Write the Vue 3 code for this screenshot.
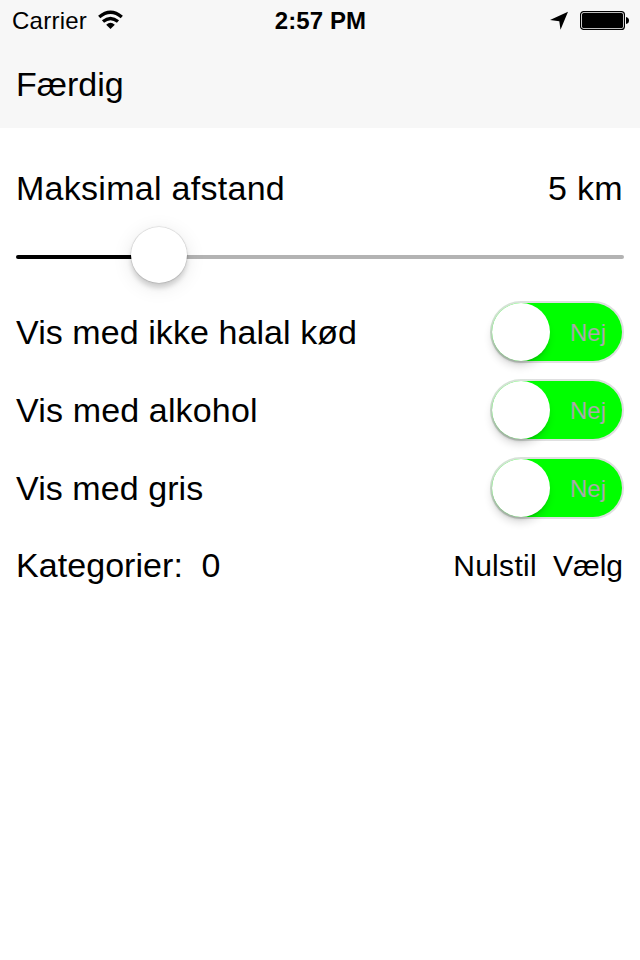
<script setup>
import { ref } from 'vue'

const distance = ref(5)
const filters = ref([
  { id: 'meat', label: 'Vis med ikke halal kød' },
  { id: 'alcohol', label: 'Vis med alkohol' },
  { id: 'pork', label: 'Vis med gris' },
])
const categories = ref(0)
</script>

<template>
  <main class="screen">
    <header class="top">
      <div class="status">
        <div class="carrier">
          <span class="carrier-name">Carrier</span>
          <svg class="wifi" width="26" height="20" viewBox="0 0 26 20">
            <g fill="none" stroke="#000" stroke-width="3.3">
              <path d="M2.2 7Q13.5 -2.5 24.8 7" />
              <path d="M6 11.6Q13.5 5.4 21 11.6" />
            </g>
            <path d="M9.2 14.7Q13.5 11 17.8 14.7L13.5 19Z" />
          </svg>
        </div>
        <span class="time">2:57 PM</span>
        <div class="indicators">
          <svg width="18" height="19" viewBox="0 0 18 19">
            <path d="M18 0.8L10.5 18.8L9.3 10.3L0 8.9Z" />
          </svg>
          <svg width="49" height="19" viewBox="0 0 49 19">
            <rect x="0.6" y="0.6" width="43.8" height="17.8" rx="3" fill="#fff" stroke="#000" stroke-width="1.2" />
            <rect x="2" y="2" width="41" height="15" rx="1.5" />
            <path d="M46 6Q49 6.5 49 9.5Q49 12.5 46 13Z" />
          </svg>
        </div>
      </div>
      <nav class="nav"><span class="done">Færdig</span></nav>
    </header>

    <section class="row distance">
      <span class="title">Maksimal afstand</span>
      <span class="km">{{ distance }} km</span>
    </section>
    <div class="slider">
      <span class="track filled"></span>
      <span class="thumb"></span>
      <span class="track rest"></span>
    </div>

    <section v-for="f in filters" :key="f.id" class="row filter">
      <span :class="f.id">{{ f.label }}</span>
      <div class="toggle">
        <span class="knob"></span>
        <span class="state">Nej</span>
      </div>
    </section>

    <section class="row categories">
      <span class="cat">Kategorier:</span>
      <span class="count">{{ categories }}</span>
      <div class="actions">
        <span class="reset">Nulstil</span>
        <span class="choose">Vælg</span>
      </div>
    </section>
  </main>
</template>

<style>
body {
  background: #fff;
}
</style>

<style scoped>
.screen {
  width: 640px;
  height: 960px;
  overflow: hidden;
  background: #fff;
  color: #000;
  font-family: "Liberation Sans", Arial, sans-serif;
  font-size: 34px;
  line-height: 40px;
  white-space: nowrap;
}
svg {
  display: block;
}
.top {
  height: 128px;
  background: #f7f7f7;
}
.status {
  display: grid;
  grid-template-columns: 1fr auto 1fr;
  align-items: center;
  height: 40px;
  padding: 0 11px 0 12px;
  font-size: 24px;
  line-height: 28px;
}
.carrier {
  display: flex;
  align-items: center;
}
.carrier-name {
  width: 85px;
  padding-top: 2px;
  letter-spacing: 0.25px;
}
.time {
  padding-top: 2px;
  font-weight: 700;
  font-size: 24px;
  letter-spacing: 0.1px;
}
.indicators {
  display: flex;
  justify-content: flex-end;
  gap: 12px;
}
.nav {
  padding: 24px 16px 0;
}
.row {
  display: flex;
  align-items: center;
  justify-content: space-between;
  padding: 0 16px;
}
.distance {
  margin-top: 40px;
  height: 40px;
}
.title {
  letter-spacing: 0.28px;
}
.km {
  margin-right: 1px;
  letter-spacing: 0.3px;
}
.slider {
  display: flex;
  align-items: center;
  height: 62px;
  margin: 17px 16px 0;
}
.track {
  height: 4px;
  margin-top: 2px;
}
.filled {
  width: 116px;
  border-radius: 2px 0 0 2px;
  background: #000;
}
.rest {
  flex: 1;
  border-radius: 0 2px 2px 0;
  background: #b3b3b3;
}
.thumb {
  width: 56px;
  height: 56px;
  margin: -2px -1px 0;
  border-radius: 50%;
  background: #fff;
  z-index: 1;
  box-shadow: 0 0 1px 0.5px rgba(0, 0, 0, 0.16), 0 4px 20px rgba(0, 0, 0, 0.1), 0 5px 5px rgba(0, 0, 0, 0.15);
}
.filter {
  height: 78px;
}
.meat,
.pork {
  letter-spacing: 0.07px;
}
.alcohol {
  letter-spacing: 0.15px;
}
.slider + .filter {
  margin-top: 6px;
}
.toggle {
  box-sizing: border-box;
  display: flex;
  align-items: center;
  justify-content: space-between;
  width: 134px;
  height: 62px;
  padding-right: 16px;
  border: 2px solid transparent;
  border-radius: 31px;
  background:
    linear-gradient(#0f0, #0f0) padding-box,
    linear-gradient(90deg, #cfe6d0, #dfdfe0 35%) border-box;
}
.knob {
  width: 58px;
  height: 58px;
  border-radius: 50%;
  background: #fff;
  box-shadow: -1px 6px 9px -1px rgba(0, 0, 0, 0.16), -1px 3px 3px -1px rgba(0, 0, 0, 0.14);
}
.state {
  padding-top: 2px;
  font-size: 24px;
  color: #a9a9a9;
}
.categories {
  height: 76px;
  justify-content: flex-start;
}
.cat {
  letter-spacing: 0.06px;
}
.count {
  margin-left: 18.5px;
}
.actions {
  display: flex;
  gap: 16px;
  margin: 2px 1px 0 auto;
  font-size: 30px;
}
.reset {
  letter-spacing: 0.3px;
}
</style>
